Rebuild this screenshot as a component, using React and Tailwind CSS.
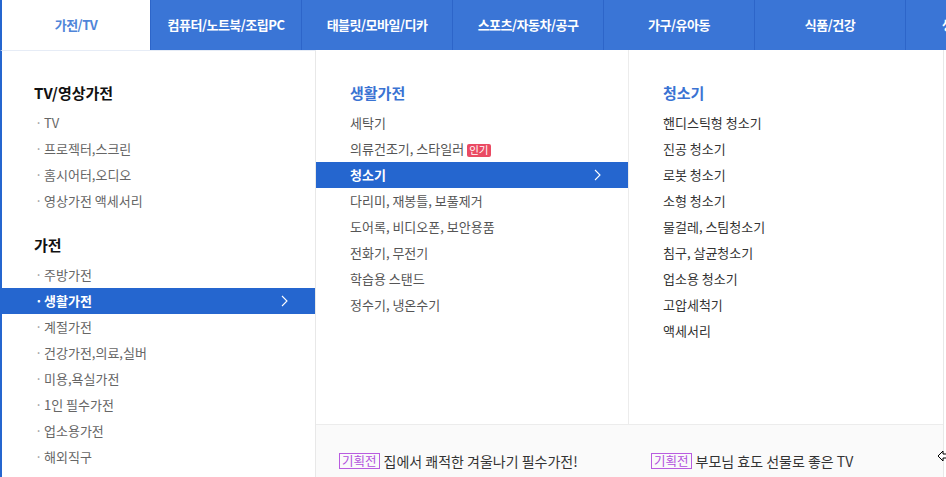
import React from 'react';

const tabs = ['컴퓨터/노트북/조립PC', '태블릿/모바일/디카', '스포츠/자동차/공구', '가구/유아동', '식품/건강', '생활/주방/사무'];

const groups = [
  { title: 'TV/영상가전', items: ['TV', '프로젝터,스크린', '홈시어터,오디오', '영상가전 액세서리'] },
  { title: '가전', items: ['주방가전', '생활가전', '계절가전', '건강가전,의료,실버', '미용,욕실가전', '1인 필수가전', '업소용가전', '해외직구'] },
];

const midItems = ['세탁기', '의류건조기, 스타일러', '청소기', '다리미, 재봉틀, 보풀제거', '도어록, 비디오폰, 보안용품', '전화기, 무전기', '학습용 스탠드', '정수기, 냉온수기'];

const subItems = ['핸디스틱형 청소기', '진공 청소기', '로봇 청소기', '소형 청소기', '물걸레, 스팀청소기', '침구, 살균청소기', '업소용 청소기', '고압세척기', '액세서리'];

const Chevron = () => (
  <svg width="7" height="12" viewBox="0 0 7 12" className="shrink-0">
    <polyline points="1,1 6,6 1,11" fill="none" stroke="#fff" strokeWidth="1.1" />
  </svg>
);

const Promo = ({ text }) => (
  <div className="flex w-[312px] items-center pl-[23px]">
    <span className="flex h-[16px] items-center border border-[#b95ce0] px-[2px] text-[12.5px] leading-none text-[#b14fdc]">기획전</span>
    <span className="ml-[4px] text-[14px] text-[#333]">{text}</span>
  </div>
);

export default function App() {
  return (
    <div className="h-[477px] w-[946px] overflow-hidden bg-white" style={{ fontFamily: '"Noto Sans CJK KR", "Noto Sans", sans-serif' }}>
      {/* top nav */}
      <div className="flex h-[50px] bg-[#3a75d6]">
        <div className="flex w-[150px] shrink-0 items-center justify-center border-l-2 border-[#2566cf] bg-white text-[13px] font-bold tracking-[-0.5px] text-[#4f85d9]">
          가전/TV
        </div>
        {tabs.map((t) => (
          <div key={t} className="flex w-[151px] shrink-0 items-center justify-center whitespace-nowrap border-l border-[#2d65c9] text-[13px] font-bold tracking-[-0.5px] text-white">
            {t}
          </div>
        ))}
      </div>

      <div className="flex">
        {/* left column */}
        <div className="h-[427px] w-[316px] shrink-0 border-l-2 border-r border-t border-l-[#2566cf] border-r-[#e8e8e8] border-t-[#e6ecf6] pt-[29px]">
          {groups.map((g, gi) => (
            <div key={g.title} className={gi > 0 ? 'mt-[18px]' : ''}>
              <div className="flex h-[26px] items-center pl-[32px] text-[15px] font-bold text-[#111]">{g.title}</div>
              <div className="mt-[4px]">
                {g.items.map((it) => {
                  const active = it === '생활가전';
                  return (
                    <div key={it} className={`flex h-[26px] items-center pl-[33px] pr-[27px] text-[13px] ${active ? 'bg-[#2566cf] font-bold text-white' : 'text-[#666]'}`}>
                      <span className={`w-[9px] ${active ? 'text-white' : 'text-[#999]'}`}>·</span>
                      <span className="flex-1">{it}</span>
                      {active && <Chevron />}
                    </div>
                  );
                })}
              </div>
            </div>
          ))}
        </div>

        {/* right area */}
        <div className="flex w-[628px] shrink-0 flex-col border-r border-[#e8e8e8]">
          <div className="flex h-[374px]">
            <div className="w-[313px] shrink-0 border-r border-[#ececec] pt-[30px]">
              <div className="flex h-[26px] items-center pl-[34px] text-[15px] font-bold text-[#3a73d3]">생활가전</div>
              <div className="mt-[4px]">
                {midItems.map((it) => {
                  const active = it === '청소기';
                  return (
                    <div key={it} className={`flex h-[26px] items-center pl-[34px] pr-[27px] text-[13px] ${active ? 'bg-[#2566cf] font-bold text-white' : 'text-[#555]'}`}>
                      <span className="flex-1">
                        {it}
                        {it === '의류건조기, 스타일러' && (
                          <span className="ml-[3px] inline-flex h-[13px] items-center rounded-[2px] bg-[#ea4a63] px-[2px] align-middle text-[10.5px] leading-none text-white">인기</span>
                        )}
                      </span>
                      {active && <Chevron />}
                    </div>
                  );
                })}
              </div>
            </div>
            <div className="flex-1 pt-[30px]">
              <div className="flex h-[26px] items-center pl-[34px] text-[15px] font-bold text-[#3a73d3]">청소기</div>
              <div className="mt-[4px]">
                {subItems.map((it) => (
                  <div key={it} className="flex h-[26px] items-center pl-[34px] text-[13px] text-[#333]">{it}</div>
                ))}
              </div>
            </div>
          </div>
          {/* bottom promo bar */}
          <div className="relative flex flex-1 border-t border-[#ececec] bg-[#fafafa] pt-[20px]">
            <Promo text="집에서 쾌적한 겨울나기 필수가전!" />
            <Promo text="부모님 효도 선물로 좋은 TV" />
            <svg width="12" height="14" viewBox="0 0 12 14" className="absolute right-[-6px] top-[24px]">
              <path d="M1 7 L6 2 L6 5 L11 5 L11 9 L6 9 L6 12 Z" fill="#fff" stroke="#000" strokeWidth="1" />
            </svg>
          </div>
        </div>
      </div>
    </div>
  );
}
